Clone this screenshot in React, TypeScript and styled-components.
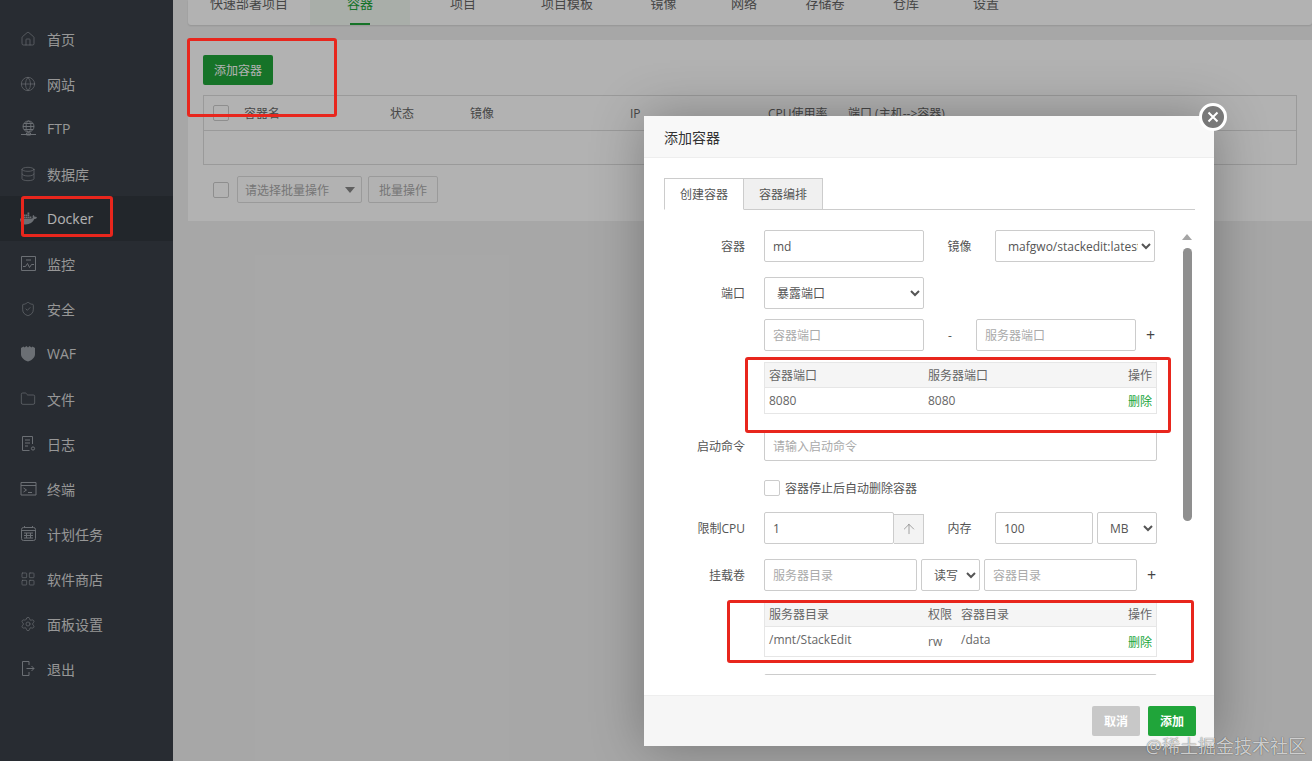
import React from 'react';
import styled, { createGlobalStyle } from 'styled-components';
import { ArrowUp, Database, Folder, Globe, House, LayoutGrid, Settings, ShieldCheck } from 'lucide-react';
import { FaDocker } from 'react-icons/fa';

const font = `"Open Sans", "Noto Sans CJK SC", sans-serif`;

const GlobalStyle = createGlobalStyle`
  html, body {
    margin: 0;
    height: 100%;
    overflow: hidden;
    font-family: ${font};
    background: #f0f0f0;
  }
  * { box-sizing: border-box; }
`;

const Page = styled.div`
  position: relative;
  display: flex;
  width: 1312px;
  height: 761px;
  overflow: hidden;
`;

const Sidebar = styled.aside`
  width: 173px;
  flex: none;
  background: #3e434d;
`;

const Menu = styled.nav`
  padding-top: 16px;
  padding-bottom: 71px;
  background: #3a4048;
`;

const MenuItem = styled.div<{ $active?: boolean }>`
  display: flex;
  align-items: center;
  height: 45px;
  padding-left: 20px;
  font-size: 14px;
  color: ${({ $active }) => ($active ? '#fff' : '#d8d8d8')};
  background: ${({ $active }) => ($active ? '#31373e' : 'transparent')};
`;

const MenuIcon = styled.span`
  display: flex;
  width: 27px;
  color: #9a9fa6;
`;

const Main = styled.main`
  flex: 1;
  min-width: 0;
  padding-left: 15px;
`;

const TabBar = styled.div`
  display: flex;
  height: 25px;
  overflow: hidden;
  background: #fff;
  box-shadow: 0 1px 2px rgba(0, 0, 0, 0.12);
  border-radius: 0 0 3px 3px;
`;

const TabItem = styled.div<{ $w: number; $active?: boolean }>`
  position: relative;
  flex: none;
  width: ${({ $w }) => $w}px;
  height: 25px;
  display: flex;
  align-items: flex-end;
  justify-content: center;
  font-size: 13px;
  line-height: 44px;
  color: ${({ $active }) => ($active ? '#20a53a' : '#666')};
  background: ${({ $active }) => ($active ? '#f2f9f3' : 'transparent')};
  &::after {
    content: '';
    display: ${({ $active }) => ($active ? 'block' : 'none')};
    position: absolute;
    left: 40px;
    bottom: 0;
    width: 20px;
    height: 2px;
    background: #20a53a;
  }
`;

const Card = styled.section`
  margin-top: 15px;
  height: 181px;
  padding: 15px;
  background: #fff;
`;

const PrimaryButton = styled.div`
  display: flex;
  align-items: center;
  justify-content: center;
  width: 70px;
  height: 30px;
  border-radius: 2px;
  background: #20a53a;
  color: #fff;
  font-size: 12px;
`;

const DataTable = styled.div`
  margin-top: 10px;
  height: 70px;
  border: 1px solid #ddd;
`;

const DataHead = styled.div`
  display: grid;
  grid-template-columns: 31px 146px 80px 160px 138px 80px 1fr;
  align-items: center;
  height: 35px;
  padding-left: 9px;
  font-size: 12px;
  color: #666;
  border-bottom: 1px solid #ddd;
  white-space: nowrap;
`;

const Check = styled.span`
  display: block;
  width: 16px;
  height: 16px;
  border: 1px solid #ccc;
  border-radius: 2px;
  background: #fff;
`;

const BatchRow = styled.div`
  display: flex;
  align-items: center;
  margin-top: 11px;
  padding-left: 10px;
`;

const BatchSelect = styled.div`
  display: flex;
  align-items: center;
  justify-content: space-between;
  width: 125px;
  height: 27px;
  margin-left: 8px;
  padding: 0 6px 0 7px;
  border: 1px solid #ddd;
  border-radius: 2px;
  font-size: 12px;
  color: #aaa;
  &::after {
    content: '';
    border: 5px solid transparent;
    border-top: 6px solid #888;
    border-bottom: 0;
  }
`;

const BatchButton = styled.div`
  display: flex;
  align-items: center;
  justify-content: center;
  width: 70px;
  height: 27px;
  margin-left: 6px;
  border: 1px solid #ddd;
  border-radius: 2px;
  font-size: 12px;
  color: #aaa;
`;

const Overlay = styled.div`
  position: absolute;
  inset: 0;
  background: rgba(0, 0, 0, 0.3);
`;

const Dialog = styled.div`
  position: absolute;
  left: 644px;
  top: 116px;
  width: 570px;
  height: 630px;
  display: flex;
  flex-direction: column;
  background: #fff;
  box-shadow: 1px 1px 50px rgba(0, 0, 0, 0.3);
`;

const DialogTitle = styled.div`
  display: flex;
  align-items: center;
  flex: none;
  height: 42px;
  padding-left: 20px;
  font-size: 14px;
  color: #333;
  background: #f8f8f8;
  border-bottom: 1px solid #eee;
`;

const CloseButton = styled.div`
  position: absolute;
  right: -13px;
  top: -13px;
  display: flex;
  align-items: center;
  justify-content: center;
  width: 28px;
  height: 28px;
  border-radius: 50%;
  border: 3px solid #fff;
  background: #787878;
`;

const DialogTabs = styled.div`
  display: flex;
  flex: none;
  margin: 20px 19px 0 20px;
  height: 32px;
  border-bottom: 1px solid #ccc;
`;

const DialogTab = styled.div<{ $active?: boolean }>`
  display: flex;
  align-items: center;
  justify-content: center;
  width: ${({ $active }) => ($active ? 80 : 79)}px;
  height: 32px;
  font-size: 12px;
  color: #555;
  border: 1px solid #ccc;
  border-left-width: ${({ $active }) => ($active ? 1 : 0)}px;
  border-bottom-color: ${({ $active }) => ($active ? '#fff' : '#ccc')};
  background: ${({ $active }) => ($active ? '#fff' : '#f0f0f0')};
`;

const DialogBody = styled.div`
  display: flex;
  flex: none;
  height: 465px;
  overflow: hidden;
  padding-left: 20px;
`;

const Form = styled.div`
  flex: none;
  width: 493px;
  padding-top: 20px;
`;

const Row = styled.div<{ $mb?: number }>`
  display: flex;
  align-items: center;
  margin-bottom: ${({ $mb }) => $mb ?? 15}px;
`;

const Label = styled.label`
  flex: none;
  width: 81px;
  margin-right: 19px;
  text-align: right;
  font-size: 12px;
  color: #555;
  white-space: nowrap;
`;

const Inline = styled.span<{ $w: number; $ml?: number }>`
  flex: none;
  width: ${({ $w }) => $w}px;
  margin-left: ${({ $ml }) => $ml ?? 0}px;
  font-size: 12px;
  color: #555;
  text-align: center;
`;

const TextBox = styled.input<{ $w: number; $ml?: number; $h?: number }>`
  flex: none;
  width: ${({ $w }) => $w}px;
  height: ${({ $h }) => $h ?? 32}px;
  margin-left: ${({ $ml }) => $ml ?? 0}px;
  padding: 0 8px;
  border: 1px solid #ccc;
  border-radius: 2px;
  outline: none;
  font-family: ${font};
  font-size: 12px;
  color: #555;
  &::placeholder { color: #aaa; }
`;

const Picker = styled.select<{ $w: number; $ml?: number }>`
  flex: none;
  width: ${({ $w }) => $w}px;
  height: 32px;
  margin-left: ${({ $ml }) => $ml ?? 0}px;
  padding: 0 0 0 8px;
  border: 1px solid #ccc;
  border-radius: 2px;
  outline: none;
  background: #fff;
  font-family: ${font};
  font-size: 12px;
  color: #555;
`;

const Stepper = styled.div`
  display: flex;
  align-items: center;
  justify-content: center;
  flex: none;
  width: 30px;
  height: 30px;
  margin-top: 2px;
  background: #f3f3f3;
  border: 1px solid #ccc;
  border-left: 0;
  color: #777;
`;

const Plus = styled.span`
  flex: none;
  margin-left: 10px;
  font-size: 16px;
  line-height: 16px;
  color: #444;
`;

const CheckText = styled.span`
  margin-left: 5px;
  font-size: 12px;
  color: #555;
`;

const MiniTable = styled.div<{ $cols: string; $bodyH: number }>`
  width: 393px;
  margin-left: 100px;
  border: 1px solid #e6e6e6;
  font-size: 12px;
  color: #666;
  display: grid;
  grid-template-columns: ${({ $cols }) => $cols};
  grid-template-rows: 25px ${({ $bodyH }) => $bodyH}px;
  align-items: center;
`;

const HeadCell = styled.div<{ $end?: boolean }>`
  height: 100%;
  display: flex;
  align-items: center;
  justify-content: ${({ $end }) => ($end ? 'flex-end' : 'flex-start')};
  padding: 0 ${({ $end }) => ($end ? 4 : 0)}px 0 4px;
  background: #f5f5f5;
  border-bottom: 1px solid #e6e6e6;
`;

const BodyCell = styled.div<{ $end?: boolean; $up?: boolean }>`
  display: flex;
  justify-content: ${({ $end }) => ($end ? 'flex-end' : 'flex-start')};
  padding: 0 ${({ $end }) => ($end ? 4 : 0)}px 0 4px;
  transform: translateY(${({ $up }) => ($up ? -2 : 0)}px);
  color: ${({ $end }) => ($end ? '#20a53a' : '#666')};
`;

const Scrollbar = styled.div`
  flex: none;
  display: flex;
  flex-direction: column;
  align-items: center;
  width: 10px;
  margin-left: 25px;
  padding-top: 24px;
`;

const ScrollArrow = styled.span`
  border: 5px solid transparent;
  border-bottom: 6px solid #a5a5a5;
  border-top: 0;
`;

const ScrollThumb = styled.div`
  width: 9px;
  height: 273px;
  margin-top: 8px;
  border-radius: 5px;
  background: #8f8f8f;
`;

const DialogFooter = styled.div`
  display: flex;
  justify-content: flex-end;
  align-items: center;
  gap: 8px;
  flex: 1;
  margin-top: 20px;
  padding-right: 18px;
  background: #f6f6f6;
  border-top: 1px solid #eee;
`;

const FooterButton = styled.div<{ $primary?: boolean }>`
  display: flex;
  align-items: center;
  justify-content: center;
  width: 48px;
  height: 30px;
  border-radius: 2px;
  font-size: 12px;
  font-weight: 700;
  color: #fff;
  background: ${({ $primary }) => ($primary ? '#20a53a' : '#c8c8c8')};
`;

const Mark = styled.div<{ $l: number; $t: number; $w: number; $h: number }>`
  position: absolute;
  left: ${({ $l }) => $l}px;
  top: ${({ $t }) => $t}px;
  width: ${({ $w }) => $w}px;
  height: ${({ $h }) => $h}px;
  border: 3px solid #e8261d;
  border-radius: 3px;
`;

const Watermark = styled.div`
  position: absolute;
  right: 6px;
  bottom: 3px;
  font-size: 18px;
  line-height: 24px;
  color: rgba(255, 255, 255, 0.75);
  text-shadow: 0 0 1px rgba(0, 0, 0, 0.75);
  white-space: nowrap;
`;

const Line = ({ children }: { children: React.ReactNode }) => (
  <svg width="17" height="17" viewBox="0 0 17 17" fill="none" stroke="currentColor" strokeWidth="1">
    {children}
  </svg>
);

const lucideProps = { size: 16, strokeWidth: 1 };

const menu: { label: string; icon: React.ReactNode; active?: boolean }[] = [
  { label: '首页', icon: <House {...lucideProps} /> },
  { label: '网站', icon: <Globe {...lucideProps} /> },
  {
    label: 'FTP',
    icon: (
      <Line>
        <circle cx="8.5" cy="6.5" r="5.5" />
        <ellipse cx="8.5" cy="6.5" rx="2.4" ry="5.5" />
        <path d="M3 6.5h11M4 3.5h9M4 9.5h9M1 14.5h15M6.5 13h4v2h-4z" />
      </Line>
    ),
  },
  { label: '数据库', icon: <Database {...lucideProps} /> },
  { label: 'Docker', icon: <FaDocker size={17} />, active: true },
  {
    label: '监控',
    icon: (
      <Line>
        <path d="M1.5 1.5h14v14h-14zM3 11.5h2.5l2-3 2 4 2-3h2.500M6 5h5" />
      </Line>
    ),
  },
  { label: '安全', icon: <ShieldCheck {...lucideProps} /> },
  {
    label: 'WAF',
    icon: (
      <svg width="16" height="17" viewBox="0 0 16 17" fill="currentColor">
        <path d="M1 3l2.500-1.500 1 1L6.500 1l1.500 1.500L9.500 1l2 1.500 1-1L15 3v6.500c0 3-3.500 6-7 7-3.500-1-7-4-7-7z" />
      </svg>
    ),
  },
  { label: '文件', icon: <Folder {...lucideProps} /> },
  {
    label: '日志',
    icon: (
      <Line>
        <path d="M12.500 9V1.500h-10v14h7M5 5h5M5 8h5M5 11h3" />
        <circle cx="13" cy="13.500" r="1.600" />
      </Line>
    ),
  },
  {
    label: '终端',
    icon: (
      <Line>
        <path d="M1 2.500h15v12.500H1zM1 5.500h15M3.500 8l3 2-3 2M8 12.500h4" />
      </Line>
    ),
  },
  {
    label: '计划任务',
    icon: (
      <Line>
        <rect x="1.500" y="2.500" width="14" height="13" rx="2" />
        <path d="M1.500 5.500h14M4.500 1v2M12.500 1v2M4 8h9M4 10.500h9M4 13h9M6.500 8v5M10.500 8v5" />
      </Line>
    ),
  },
  { label: '软件商店', icon: <LayoutGrid {...lucideProps} /> },
  { label: '面板设置', icon: <Settings {...lucideProps} /> },
  {
    label: '退出',
    icon: (
      <Line>
        <path d="M9 1.500H2.500v14H9M6.500 8.500H14M11.500 6l2.500 2.500-2.500 2.500M9 1.500V5M9 12v3.500" />
      </Line>
    ),
  },
];

const tabs = [
  { label: '快速部署项目', w: 122 },
  { label: '容器', w: 100, active: true },
  { label: '项目', w: 106 },
  { label: '项目模板', w: 102 },
  { label: '镜像', w: 91 },
  { label: '网络', w: 70 },
  { label: '存储卷', w: 92 },
  { label: '仓库', w: 70 },
  { label: '设置', w: 90 },
];

const App = () => {
  return (
    <Page>
      <GlobalStyle />
      <Sidebar>
        <Menu>
          {menu.map((item) => (
            <MenuItem key={item.label} $active={item.active}>
              <MenuIcon>{item.icon}</MenuIcon>
              {item.label}
            </MenuItem>
          ))}
        </Menu>
      </Sidebar>
      <Main>
        <TabBar>
          {tabs.map((tab) => (
            <TabItem key={tab.label} $w={tab.w} $active={tab.active}>
              {tab.label}
            </TabItem>
          ))}
        </TabBar>
        <Card>
          <PrimaryButton>添加容器</PrimaryButton>
          <DataTable>
            <DataHead>
              <Check />
              <span>容器名</span>
              <span>状态</span>
              <span>镜像</span>
              <span>IP</span>
              <span>CPU使用率</span>
              <span>端口 (主机--&gt;容器)</span>
            </DataHead>
          </DataTable>
          <BatchRow>
            <Check />
            <BatchSelect>请选择批量操作</BatchSelect>
            <BatchButton>批量操作</BatchButton>
          </BatchRow>
        </Card>
      </Main>

      <Overlay />
      <Mark $l={187} $t={38} $w={150} $h={79} />
      <Mark $l={21} $t={196} $w={92} $h={41} />

      <Dialog>
        <DialogTitle>添加容器</DialogTitle>
        <CloseButton>
          <svg width="12" height="12" viewBox="0 0 12 12" stroke="#fff" strokeWidth="2">
            <path d="M1.500 1.500l9 9M10.500 1.500l-9 9" />
          </svg>
        </CloseButton>
        <DialogTabs>
          <DialogTab $active>创建容器</DialogTab>
          <DialogTab>容器编排</DialogTab>
        </DialogTabs>
        <DialogBody>
          <Form>
            <Row>
              <Label>容器</Label>
              <TextBox $w={160} defaultValue="md" />
              <Inline $w={71}>镜像</Inline>
              <Picker $w={160} defaultValue="mafgwo/stackedit:latest">
                <option>mafgwo/stackedit:latest</option>
              </Picker>
            </Row>
            <Row $mb={10}>
              <Label>端口</Label>
              <Picker $w={160} defaultValue="暴露端口">
                <option>暴露端口</option>
              </Picker>
            </Row>
            <Row $mb={11}>
              <Label />
              <TextBox $w={160} placeholder="容器端口" />
              <Inline $w={52}>-</Inline>
              <TextBox $w={160} placeholder="服务器端口" />
              <Plus>+</Plus>
            </Row>
            <Row $mb={17}>
              <MiniTable $cols="159px 1fr 60px" $bodyH={25}>
                <HeadCell>容器端口</HeadCell>
                <HeadCell>服务器端口</HeadCell>
                <HeadCell $end>操作</HeadCell>
                <BodyCell>8080</BodyCell>
                <BodyCell>8080</BodyCell>
                <BodyCell $end>删除</BodyCell>
              </MiniTable>
            </Row>
            <Row $mb={18}>
              <Label>启动命令</Label>
              <TextBox $w={393} $h={30} placeholder="请输入启动命令" />
            </Row>
            <Row>
              <Label />
              <Check />
              <CheckText>容器停止后自动删除容器</CheckText>
            </Row>
            <Row>
              <Label>限制CPU</Label>
              <TextBox $w={130} defaultValue="1" />
              <Stepper>
                <ArrowUp size={16} strokeWidth={1} />
              </Stepper>
              <Inline $w={71}>内存</Inline>
              <TextBox $w={98} defaultValue="100" />
              <Picker $w={60} $ml={4} defaultValue="MB">
                <option>MB</option>
              </Picker>
            </Row>
            <Row $mb={10}>
              <Label>挂载卷</Label>
              <TextBox $w={153} placeholder="服务器目录" />
              <Picker $w={59} $ml={4} defaultValue="读写">
                <option>读写</option>
              </Picker>
              <TextBox $w={153} $ml={4} placeholder="容器目录" />
              <Plus>+</Plus>
            </Row>
            <Row $mb={17}>
              <MiniTable $cols="159px 33px 1fr 60px" $bodyH={29}>
                <HeadCell>服务器目录</HeadCell>
                <HeadCell>权限</HeadCell>
                <HeadCell>容器目录</HeadCell>
                <HeadCell $end>操作</HeadCell>
                <BodyCell $up>/mnt/StackEdit</BodyCell>
                <BodyCell>rw</BodyCell>
                <BodyCell $up>/data</BodyCell>
                <BodyCell $end>删除</BodyCell>
              </MiniTable>
            </Row>
            <Row>
              <Label />
              <TextBox $w={393} />
            </Row>
          </Form>
          <Scrollbar>
            <ScrollArrow />
            <ScrollThumb />
          </Scrollbar>
        </DialogBody>
        <DialogFooter>
          <FooterButton>取消</FooterButton>
          <FooterButton $primary>添加</FooterButton>
        </DialogFooter>
      </Dialog>

      <Mark $l={745} $t={357} $w={426} $h={76} />
      <Mark $l={727} $t={600} $w={467} $h={63} />
      <Watermark>@稀土掘金技术社区</Watermark>
    </Page>
  );
};

export default App;
